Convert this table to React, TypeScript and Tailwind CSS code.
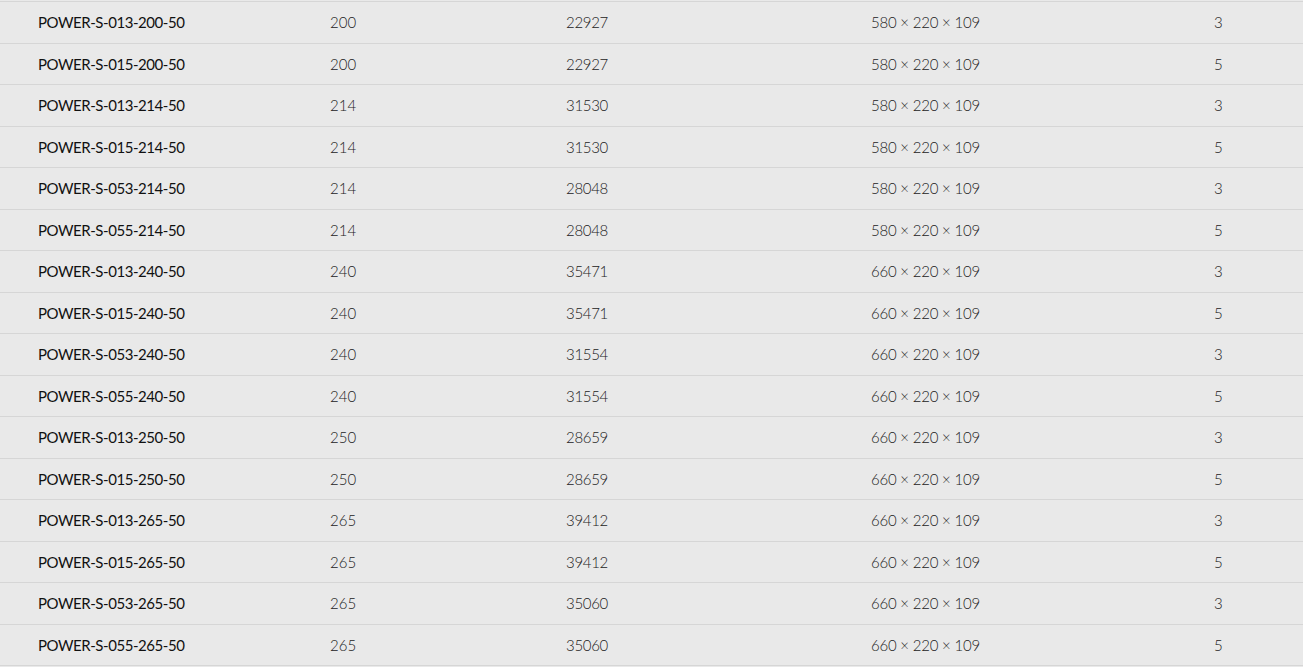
import React from "react";

const rows: [string, string, string, string, string][] = [
  ["POWER-S-013-200-50", "200", "22927", "580 × 220 × 109", "3"],
  ["POWER-S-015-200-50", "200", "22927", "580 × 220 × 109", "5"],
  ["POWER-S-013-214-50", "214", "31530", "580 × 220 × 109", "3"],
  ["POWER-S-015-214-50", "214", "31530", "580 × 220 × 109", "5"],
  ["POWER-S-053-214-50", "214", "28048", "580 × 220 × 109", "3"],
  ["POWER-S-055-214-50", "214", "28048", "580 × 220 × 109", "5"],
  ["POWER-S-013-240-50", "240", "35471", "660 × 220 × 109", "3"],
  ["POWER-S-015-240-50", "240", "35471", "660 × 220 × 109", "5"],
  ["POWER-S-053-240-50", "240", "31554", "660 × 220 × 109", "3"],
  ["POWER-S-055-240-50", "240", "31554", "660 × 220 × 109", "5"],
  ["POWER-S-013-250-50", "250", "28659", "660 × 220 × 109", "3"],
  ["POWER-S-015-250-50", "250", "28659", "660 × 220 × 109", "5"],
  ["POWER-S-013-265-50", "265", "39412", "660 × 220 × 109", "3"],
  ["POWER-S-015-265-50", "265", "39412", "660 × 220 × 109", "5"],
  ["POWER-S-053-265-50", "265", "35060", "660 × 220 × 109", "3"],
  ["POWER-S-055-265-50", "265", "35060", "660 × 220 × 109", "5"],
];

export default function App() {
  return (
    <div className="w-[1303px] h-[667px] overflow-hidden bg-[#e9e9e9] pt-[1px] font-['Lato',sans-serif]">
      <div className="border-b border-[#d6d6d6]">
        {rows.map((r, i) => (
          <div
            key={i}
            className="grid grid-cols-[292px_236px_305px_343px_1fr] items-center pl-[38px] h-[41.5px] border-t border-[#d6d6d6]"
          >
            <div className="text-[15px] text-[#111] font-normal tracking-[-0.45px]">{r[0]}</div>
            <div className="text-[15px] text-[#222] font-light">{r[1]}</div>
            <div className="text-[15px] text-[#222] font-light tracking-[-0.3px]">{r[2]}</div>
            <div className="text-[15px] text-[#222] font-light tracking-[-0.2px]">{r[3]}</div>
            <div className="text-[15px] text-[#222] font-light">{r[4]}</div>
          </div>
        ))}
      </div>
    </div>
  );
}
